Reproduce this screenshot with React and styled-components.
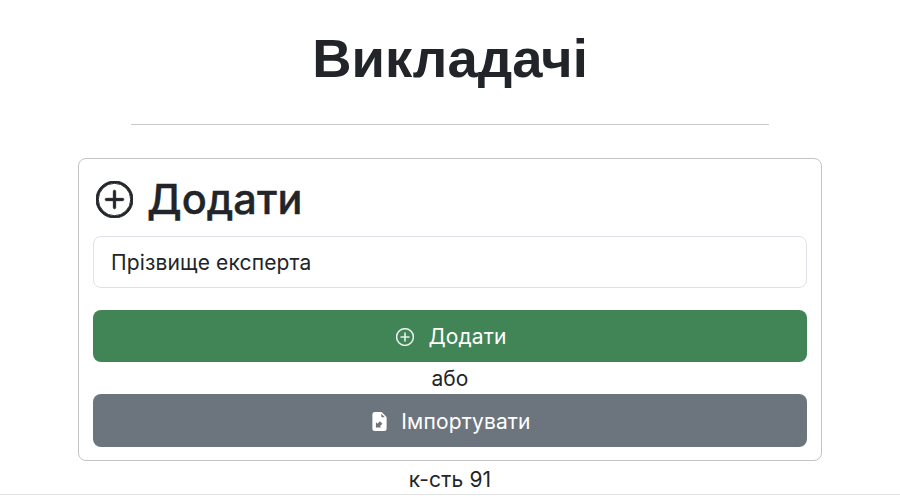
import React from "react";
import styled, { createGlobalStyle } from "styled-components";
import { BsPlusCircle } from "react-icons/bs";

const Global = createGlobalStyle`
  html, body { margin: 0; padding: 0; background: #fff; height: 100%; overflow: hidden; }
  body { font-family: Inter, "Liberation Sans", sans-serif; color: #212529; }
`;
const Page = styled.div`
  width: 900px; height: 504px; box-sizing: border-box; display: flex; flex-direction: column; align-items: center;
`;
const Title = styled.h1`
  margin: 29px 0 0; font-family: "Liberation Sans", sans-serif; font-size: 54.4px; line-height: 60px; font-weight: 700;
`;
const Rule = styled.hr`
  width: 638px; margin: 35px 0 33px; border: 0; border-top: 1px solid #c8c8c8; height: 0;
`;
const Card = styled.section`
  width: 744px; height: 303px; box-sizing: border-box; border: 1px solid #c4c4c6; border-radius: 8px;
  padding: 16px 14px 13px; display: flex; flex-direction: column;
`;
const Heading = styled.h2`
  margin: 0 0 13px; display: flex; align-items: center; gap: 14px; font-size: 41.5px; line-height: 48px; font-weight: 500;
  padding-left: 3px;
  -webkit-text-stroke: 0.4px #212529;
`;
const NameInput = styled.input`
  height: 52px; box-sizing: border-box; border: 1px solid #dee2e6; border-radius: 8px; padding: 1px 17px 0; font: inherit; font-size: 21px; letter-spacing: 0.15px; color: #212529; outline: none;
  margin-bottom: 22px;
  &::placeholder { color: #212529; opacity: 1; }
`;
const Action = styled.button`
  height: ${p => p.$h}px; border: 0; border-radius: 8px; background: ${p => p.$bg}; color: #fff; font: inherit; font-size: 21px; letter-spacing: 0.15px;
  display: flex; align-items: center; justify-content: center; gap: 14px; padding: 1px 0 0 3px;
`;
const Or = styled.div`
  height: 32px; box-sizing: border-box; padding-top: 2px; text-align: center; font-size: 21px; line-height: 30px;
`;
const Count = styled.div`
  font-size: 21px; letter-spacing: 0.15px; line-height: 24px; margin-top: 7px;
`;
const Bottom = styled.div`
  position: absolute; left: 0; right: 0; top: 494px; height: 10px; border-top: 1px solid #e2e2e2; background: #fff;
`;
const FileImport = () => (
  <svg width="15" height="19" viewBox="2 0 12 16" fill="#fff">
    <path d="M9.293 0H4a2 2 0 0 0-2 2v12a2 2 0 0 0 2 2h8a2 2 0 0 0 2-2V4.707A1 1 0 0 0 13.707 4L10 .293A1 1 0 0 0 9.293 0zM9.5 3.5v-2l3 3h-2a1 1 0 0 1-1-1z" />
    <path d="M5 13 V8.5 L6.3 9.8 L8.3 7.8 L10.4 9.9 L8.4 11.9 L9.5 13z" fill="#6c757d" />
  </svg>
);

export default function App() {
  return (
    <Page>
      <Global />
      <Title>Викладачі</Title>
      <Rule />
      <Card>
        <Heading><BsPlusCircle size={37} stroke="currentColor" strokeWidth={0.4} />Додати</Heading>
        <NameInput placeholder="Прізвище експерта" />
        <Action $bg="#418557" $h={52}><BsPlusCircle size={18} stroke="currentColor" strokeWidth={0.3} />Додати</Action>
        <Or>або</Or>
        <Action $bg="#6c757d" $h={53}><FileImport />Імпортувати</Action>
      </Card>
      <Count>к-сть 91</Count>
      <Bottom />
    </Page>
  );
}
